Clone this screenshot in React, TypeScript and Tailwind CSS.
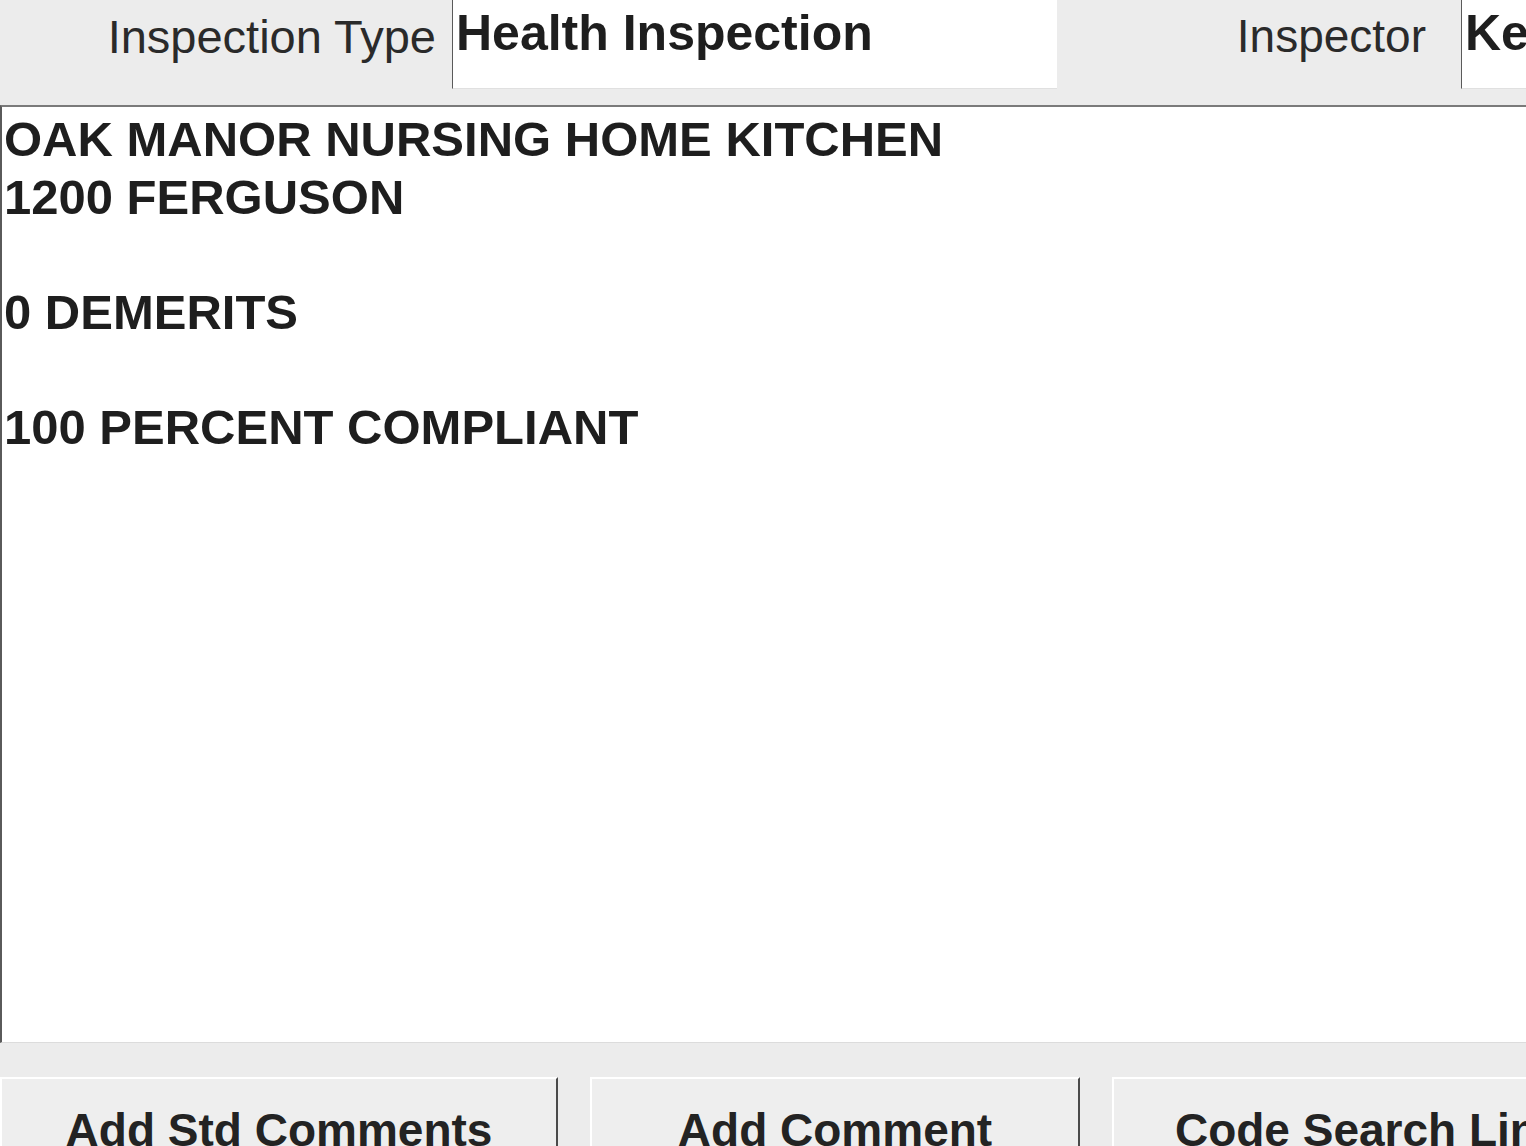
import React from 'react';

const lines = [
  'OAK MANOR NURSING HOME KITCHEN',
  '1200 FERGUSON',
  '',
  '0 DEMERITS',
  '',
  '100 PERCENT COMPLIANT',
];

const buttons = [
  { pre: 'Add ', key: 'S', post: 'td Comments', width: 'w-[558px]' },
  { pre: '', key: 'A', post: 'dd Comment', width: 'w-[490px]' },
  { pre: 'Code Search Lines', key: '', post: '', width: 'w-[540px]' },
];

const App: React.FC = () => {
  return (
    <div className="w-[1526px] h-[1146px] overflow-hidden bg-[#ececec] flex flex-col text-[#1e1e1e] font-['Liberation_Sans',Arial,sans-serif]">
      {/* Header fields */}
      <header className="h-[105px] flex items-start shrink-0">
        <label className="w-[436px] shrink-0 text-right text-[47px] leading-none pt-[13px] text-[#2a2a2a]">
          Inspection Type
        </label>
        <div className="ml-[16px] w-[605px] h-[89px] shrink-0 bg-white border-l border-[#5a5a5a] border-b border-b-[#e0e0e0] pl-[3px] pt-[8px] text-[50px] leading-none font-bold whitespace-nowrap">
          Health Inspection
        </div>
        <label className="w-[369px] shrink-0 text-right text-[46px] leading-none pt-[13px] text-[#2a2a2a]">
          Inspector
        </label>
        <div className="ml-[35px] flex-1 h-[89px] bg-white border-l border-[#5a5a5a] border-b border-b-[#e0e0e0] pl-[3px] pt-[8px] text-[50px] leading-none font-bold whitespace-nowrap overflow-hidden">
          Kevin
        </div>
      </header>

      {/* Comment text area */}
      <div className="h-[938px] shrink-0 bg-white border-t-2 border-t-[#7a7a7a] border-l-2 border-l-[#5a5a5a] pl-[2px] pt-[4px] border-b border-b-[#dcdcdc]">
        {lines.map((line, i) => (
          <div key={i} className="h-[57.7px] text-[49px] leading-[57.7px] font-bold whitespace-nowrap">
            {line}
          </div>
        ))}
      </div>

      {/* Buttons */}
      <div className="flex gap-[32px] mt-[34px]">
        {buttons.map((b, i) => (
          <button
            key={i}
            className={`${b.width} shrink-0 h-[90px] bg-[#eeeeee] border-t-2 border-l-2 border-t-white border-l-white border-r-2 border-r-[#4a4a4a] pt-[13px] text-center text-[46px] leading-none font-bold text-[#232323] whitespace-nowrap`}
          >
            {b.pre}
            {b.key && <u className="decoration-2 underline-offset-[2px]">{b.key}</u>}
            {b.post}
          </button>
        ))}
      </div>
    </div>
  );
};

export default App;
